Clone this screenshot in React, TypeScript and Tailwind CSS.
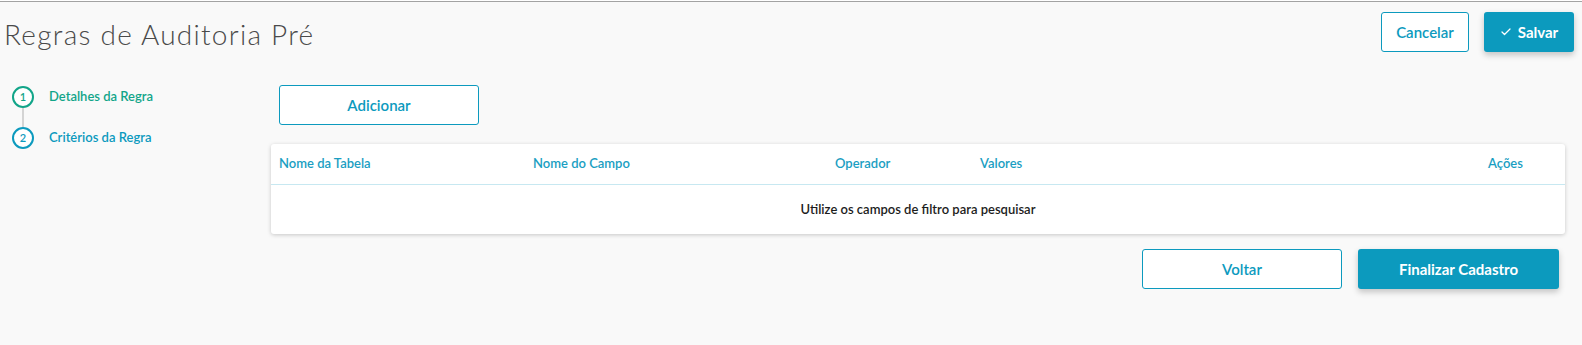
import { Check } from "lucide-react";

const font = { fontFamily: "Lato, 'Noto Sans', sans-serif" };

function Step({
  index,
  label,
  tone,
}: {
  index: number;
  label: string;
  tone: "done" | "current";
}) {
  const color = tone === "done" ? "text-[#12a589]" : "text-[#0c9abe]";
  const ring = tone === "done" ? "border-[#12a589]" : "border-[#0c9abe]";
  return (
    <div className="flex items-center gap-[15px]">
      <div
        className={`flex size-[22px] items-center justify-center rounded-full border-2 bg-white text-[11px] font-semibold ${ring} ${color}`}
      >
        {index}
      </div>
      <span className={`text-[13px] font-semibold ${color}`}>{label}</span>
    </div>
  );
}

const columns = [
  { label: "Nome da Tabela", className: "w-[254px]" },
  { label: "Nome do Campo", className: "w-[302px]" },
  { label: "Operador", className: "w-[145px]" },
  { label: "Valores", className: "flex-1" },
  { label: "Ações", className: "w-[77px]" },
];

export default function App() {
  return (
    <div
      className="mt-px h-[344px] w-full border-t border-[#a3a3a3] bg-[#f9f9f9]"
      style={font}
    >
      <div className="flex items-start justify-between pl-[4px] pr-[8px] pt-[10px]">
        <h1 className="pt-[5px] text-[28px] font-light leading-[34px] tracking-[0.045em] text-[#4a4a4a]">
          Regras de Auditoria Pré
        </h1>
        <div className="flex gap-[15px]">
          <button className="h-[40px] w-[88px] rounded-[3px] border border-[#0c9abe] bg-white text-[15px] font-semibold text-[#0c9abe]">
            Cancelar
          </button>
          <button className="flex h-[40px] w-[90px] items-center justify-center gap-[6px] rounded-[3px] bg-[#0c9abe] text-[15px] font-bold text-white shadow-[0_3px_6px_rgba(0,0,0,0.22)]">
            <Check className="size-[12px]" strokeWidth={2.5} />
            Salvar
          </button>
        </div>
      </div>

      <div className="flex pt-[33px]">
        <div className="w-[271px] shrink-0 pl-[12px] pt-[1px]">
          <Step index={1} label="Detalhes da Regra" tone="done" />
          <div className="ml-[10px] h-[19px] w-[2px] bg-[#d4d4d4]" />
          <Step index={2} label="Critérios da Regra" tone="current" />
        </div>

        <div className="flex flex-1 flex-col pr-[17px]">
          <button className="ml-[8px] h-[40px] w-[200px] rounded-[3px] border border-[#0c9abe] bg-white text-[15px] font-semibold text-[#0c9abe]">
            Adicionar
          </button>

          <div className="mt-[19px] rounded-[3px] bg-white shadow-[0_1px_4px_rgba(0,0,0,0.2)]">
            <div className="flex h-[41px] items-center border-b border-[#c7e8f1] pl-[8px] text-[13px] font-semibold text-[#1a9ec2]">
              {columns.map((c) => (
                <div key={c.label} className={c.className}>
                  {c.label}
                </div>
              ))}
            </div>
            <div className="flex h-[49px] items-center justify-center text-[13px] font-semibold text-[#1d1d1d]">
              Utilize os campos de filtro para pesquisar
            </div>
          </div>

          <div className="mt-[15px] flex justify-end gap-[16px] pr-[6px]">
            <button className="h-[40px] w-[200px] rounded-[3px] border border-[#0c9abe] bg-white text-[15px] font-semibold text-[#0c9abe]">
              Voltar
            </button>
            <button className="h-[40px] w-[201px] rounded-[3px] bg-[#0c9abe] text-[15px] font-bold text-white shadow-[0_3px_6px_rgba(0,0,0,0.22)]">
              Finalizar Cadastro
            </button>
          </div>
        </div>
      </div>
    </div>
  );
}
